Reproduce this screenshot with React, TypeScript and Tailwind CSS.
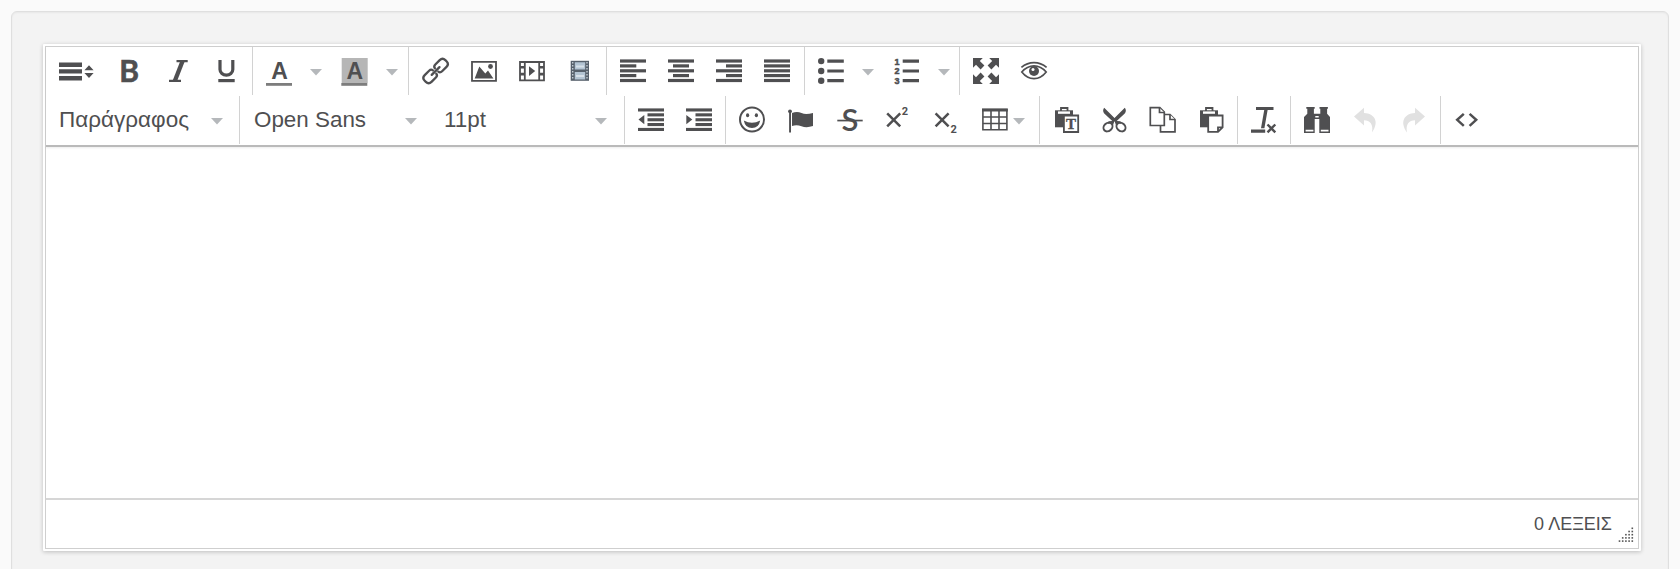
import type { ReactNode } from 'react';

function Icon({ children, width = 26 }: { children: ReactNode; width?: number }) {
  return (
    <svg
      className="shrink-0 overflow-visible"
      width={width}
      height="26"
      viewBox={`0 0 ${width} 26`}
      fill="currentColor"
      aria-hidden="true"
    >
      {children}
    </svg>
  );
}

function Button({ children, className = 'w-12' }: { children: ReactNode; className?: string }) {
  return <button className={`flex h-12 shrink-0 items-center justify-center ${className}`}>{children}</button>;
}

function Caret() {
  return (
    <svg className="mt-0.5 shrink-0" width="12" height="7" viewBox="0 0 12 7" fill="#b5b8bb" aria-hidden="true">
      <path d="M0 0h12L6 6.6z" />
    </svg>
  );
}

function CaretButton() {
  return (
    <Button className="w-[26px]">
      <Caret />
    </Button>
  );
}

function Group({ children, className }: { children: ReactNode; className: string }) {
  return <div className={`flex h-12 shrink-0 border-l border-[#d2d2d2] pl-0.5 ${className}`}>{children}</div>;
}

const lineTops = [1.4, 6.3, 11.2, 16, 20.9];

function Lines({ shortX, shortWidth }: { shortX: number; shortWidth: number }) {
  return (
    <Icon>
      {lineTops.map((y, i) => (
        <rect key={y} x={i % 2 ? shortX : 0} y={y} width={i % 2 ? shortWidth : 26} height="3.2" />
      ))}
    </Icon>
  );
}

function IndentLines({ arrow }: { arrow: string }) {
  return (
    <Icon>
      {lineTops.map((y, i) => (
        <rect key={y} x={i % 4 ? 9.5 : 0} y={y} width={i % 4 ? 16.5 : 26} height="3.1" />
      ))}
      <path d={arrow} />
    </Icon>
  );
}

function Clipboard() {
  return (
    <>
      <path d="M2 3.3h18v17H2z" />
      <path d="M8 4V1h6.5v3" fill="none" stroke="currentColor" strokeWidth="1.8" />
      <path d="M5 4.4h12v2.4H5z" fill="#fff" />
    </>
  );
}

const expandArrow = 'M0 0h9.8L6.8 3l4.6 4.6-3.8 3.8L3 6.8l-3 3z';

export default function App() {
  return (
    <div className="h-[569px] overflow-hidden bg-[#fafafa] px-[11px] pt-[11px] font-['Liberation_Sans',Arial,sans-serif] text-[#4f4f51]">
      <div className="h-[600px] rounded-md border border-[#dfdfdf] bg-[#f3f3f3] pt-8 pr-[27px] pl-[31px] shadow-[inset_0_1px_2px_rgba(0,0,0,0.05)]">
        <div className="rounded-[1px] bg-white p-0.5 shadow-[0_1px_4px_rgba(0,0,0,0.22)]">
          <div className="flex h-[503px] flex-col border border-[#cfcfcf] bg-white">
            <div className="h-[100px] shrink-0 border-b-2 border-[#bababa] shadow-[0_1px_2px_rgba(0,0,0,0.08)]">
              <div className="flex">
                <div className="flex w-[206px] shrink-0">
                  <Button className="w-[60px]">
                    <Icon width={36}>
                      <path d="M1 4.5h23v4.4H1zM1 11.2h23v4.4H1zM1 18h23v4.4H1zM31 7.3l4.6 5h-9.2zM31 20l4.6-5h-9.2z" />
                    </Icon>
                  </Button>
                  <Button>
                    <Icon>
                      <text
                        x="2.2"
                        y="24"
                        className="font-['Lato'] text-[30px] font-bold"
                        stroke="currentColor"
                        strokeWidth=".6"
                      >
                        B
                      </text>
                    </Icon>
                  </Button>
                  <Button>
                    <Icon>
                      <path d="M11.5 3.2h11.2M4 22.8h12" fill="none" stroke="currentColor" strokeWidth="2.2" />
                      <path d="M15.3 3h4.6l-7.8 20H7.5z" />
                    </Icon>
                  </Button>
                  <Button>
                    <Icon>
                      <path d="M7 2v9.5a6.4 5.6 0 0 0 12.8 0V2" fill="none" stroke="currentColor" strokeWidth="3.2" />
                      <path d="M5.3 21h16.4v3.2H5.3z" />
                    </Icon>
                  </Button>
                </div>
                <Group className="w-[156px]">
                  <Button>
                    <Icon>
                      <text x="13.5" y="21" textAnchor="middle" className="text-[23px] font-bold">A</text>
                      <path d="M0 25h26v2.8H0z" fill="#7d7d7d" />
                    </Icon>
                  </Button>
                  <CaretButton />
                  <Button className="w-[50px]">
                    <Icon>
                      <path d="M.7 0h26v25H.7z" fill="#b6b6b6" />
                      <text x="13.7" y="21" textAnchor="middle" className="text-[23px] font-bold">A</text>
                      <path d="M.3 25h26v2.8H.3z" fill="#7d7d7d" />
                    </Icon>
                  </Button>
                  <CaretButton />
                </Group>
                <Group className="w-[198px]">
                  <Button>
                    <Icon>
                      <g
                        transform="translate(.6) rotate(-45 13 13)"
                        fill="none"
                        stroke="currentColor"
                        strokeWidth="2.3"
                        strokeLinecap="round"
                      >
                        <path d="M11.6 15.4q-.3 2.4-3 2.4H2.4q-4 0-4-4v-1.6q0-4 4-4h6.2q2.7 0 3 2.4" />
                        <path d="M14.4 15.4q.3 2.4 3 2.4h6.2q4 0 4-4v-1.6q0-4-4-4h-6.2q-2.7 0-3 2.4" />
                        <path d="M7.5 13h11" />
                      </g>
                    </Icon>
                  </Button>
                  <Button>
                    <Icon>
                      <path d="M2 3.8h24v19H2z" fill="none" stroke="currentColor" strokeWidth="1.8" />
                      <path d="M4.7 20.5l4.6-12 6 7 2.7-3 5.4 8z" />
                      <circle cx="20.5" cy="8.5" r="2.4" />
                    </Icon>
                  </Button>
                  <Button>
                    <Icon>
                      <path d="M2 4h24v18.4H2zM6.8 4v18.4M21.2 4v18.4" fill="none" stroke="currentColor" strokeWidth="1.8" />
                      <path d="M2 8h5v2.6H2zM2 14.8h5v2.6H2zM21 8h5v2.6h-5zM21 14.8h5v2.6h-5zM11 8.3l6.2 4.8-6.2 4.8z" />
                    </Icon>
                  </Button>
                  <Button>
                    <Icon>
                      <path d="M4.7 2.8H23v20H4.7z" fill="#56606b" />
                      <path d="M8.8 4.2h10.4v7.4H8.8zM8.8 14h10.4v7.4H8.8z" fill="#b3c4d3" />
                      <path d="M10 8.4h8M10 18h8" stroke="#d8e1e9" strokeWidth="2" />
                      <path d="M6.7 4v18M21 4v18" stroke="#c3ccd4" strokeWidth="1.4" strokeDasharray="1.4 1.6" />
                    </Icon>
                  </Button>
                </Group>
                <Group className="w-[198px]">
                  <Button><Lines shortX={0} shortWidth={16.3} /></Button>
                  <Button><Lines shortX={5} shortWidth={16} /></Button>
                  <Button><Lines shortX={10} shortWidth={16} /></Button>
                  <Button><Lines shortX={0} shortWidth={26} /></Button>
                </Group>
                <Group className="w-[155px]">
                  <Button>
                    <Icon>
                      <circle cx="3.2" cy="3.1" r="3.2" />
                      <circle cx="3.2" cy="13" r="3.2" />
                      <circle cx="3.2" cy="22.7" r="3.2" />
                      <path d="M9.3 1.5h16.5v3.2H9.3zM9.3 11.4h16.5v3.2H9.3zM9.3 21.1h16.5v3.2H9.3z" />
                    </Icon>
                  </Button>
                  <CaretButton />
                  <Button className="w-[50px]">
                    <Icon>
                      <g
                        className="font-['Liberation_Sans'] text-[9px] font-bold"
                        textAnchor="middle"
                        stroke="currentColor"
                        strokeWidth=".5"
                      >
                        <text x="4" y="6.6">1</text>
                        <text x="4" y="16.4">2</text>
                        <text x="4" y="26.2">3</text>
                      </g>
                      <path d="M9.7 1.5h16.3v3.2H9.7zM9.7 11.4h16.3v3.2H9.7zM9.7 21.1h16.3v3.2H9.7z" />
                    </Icon>
                  </Button>
                  <CaretButton />
                </Group>
                <Group className="w-[110px]">
                  <Button>
                    <Icon>
                      <path d={expandArrow} />
                      <path d={expandArrow} transform="rotate(90 13 13)" />
                      <path d={expandArrow} transform="rotate(180 13 13)" />
                      <path d={expandArrow} transform="rotate(270 13 13)" />
                    </Icon>
                  </Button>
                  <Button>
                    <Icon>
                      <g fill="none" stroke="currentColor" strokeWidth="1.7">
                        <path d="M.8 14Q6 7.8 13 7.8T25.2 14Q20 20.6 13 20.6T.8 14z" />
                        <path d="M.4 9.4Q6 4.6 13 4.6t12.6 4.8" />
                      </g>
                      <circle cx="13" cy="13" r="5" />
                      <circle cx="12" cy="11.4" r="1.5" fill="#fff" />
                    </Icon>
                  </Button>
                </Group>
              </div>

              <div className="mt-px flex">
                <button className="flex h-12 w-[193px] shrink-0 items-center justify-between pr-4 pl-[13px] text-[22.5px]">
                  Παράγραφος
                  <Caret />
                </button>
                <Group className="w-[385px]">
                  <button className="flex h-12 w-[175px] items-center justify-between pl-3 text-[22.4px]">
                    Open Sans
                    <Caret />
                  </button>
                  <button className="ml-[27px] flex h-12 w-[163px] items-center justify-between text-[22.4px]">
                    11pt
                    <Caret />
                  </button>
                </Group>
                <Group className="w-[101px]">
                  <Button><IndentLines arrow="M.5 12.6L6.3 8v9.2z" /></Button>
                  <Button><IndentLines arrow="M6.3 12.6L.3 8v9.2z" /></Button>
                </Group>
                <Group className="w-[314px]">
                  <Button>
                    <Icon>
                      <circle cx="13" cy="12.5" r="12" fill="none" stroke="currentColor" strokeWidth="2" />
                      <ellipse cx="8.6" cy="8.3" rx="1.6" ry="2" />
                      <ellipse cx="17.4" cy="8.3" rx="1.6" ry="2" />
                      <path d="M4.8 13.5q8.2 4.6 16.4 0-1.4 7.6-8.2 7.6t-8.2-7.6z" />
                    </Icon>
                  </Button>
                  <Button>
                    <Icon>
                      <circle cx="3" cy="4.3" r="1.9" />
                      <path d="M2.1 4.5H4v21H2.1z" />
                      <path d="M5 6.1q5-2 9.5 0t11.5-.2v13.2q-6.500 2.200-11.500.2T5 19.100z" />
                    </Icon>
                  </Button>
                  <Button>
                    <Icon>
                      <text x="15" y="24" textAnchor="middle" className="font-['Lato'] text-[31px] font-semibold">S</text>
                      <path d="M2.3 12.7h25.4v1.7H2.3z" />
                    </Icon>
                  </Button>
                  <Button>
                    <Icon>
                      <path d="M4.2 6.4l13 13M17.200 6.400l-13 13" fill="none" stroke="currentColor" strokeWidth="2.5" />
                      <text x="18.7" y="7.8" className="font-['Roboto'] text-[11px] font-bold">2</text>
                    </Icon>
                  </Button>
                  <Button>
                    <Icon>
                      <path d="M4.6 6.400l13 13M17.600 6.400l-13 13" fill="none" stroke="currentColor" strokeWidth="2.5" />
                      <text x="19.4" y="25.5" className="font-['Roboto'] text-[11px] font-bold">2</text>
                    </Icon>
                  </Button>
                  <Button className="ml-[13px] w-11 gap-[5px]">
                    <Icon>
                      <path
                        d="M.9 2.5h24v20.3H.9zM9 2.5v20.3M17 2.5v20.3M1 10h24M1 16.5h24"
                        fill="none"
                        stroke="currentColor"
                        strokeWidth="1.6"
                      />
                      <path d="M0 1.5h25.8v3H0z" />
                    </Icon>
                    <Caret />
                  </Button>
                </Group>
                <Group className="w-[198px]">
                  <Button>
                    <Icon>
                      <Clipboard />
                      <path d="M10.9 8.5h14.3V25H10.9z" fill="#fff" stroke="currentColor" strokeWidth="1.8" />
                      <text
                        x="18"
                        y="21.5"
                        textAnchor="middle"
                        className="font-['Liberation_Serif'] text-[15px] font-bold"
                        stroke="currentColor"
                        strokeWidth=".4"
                      >
                        T
                      </text>
                    </Icon>
                  </Button>
                  <Button>
                    <Icon>
                      <path d="M3.200.8L13.500 11 23.800.8q2 2.600.2 5.500l-8.800 8.200h-3.400L3 6.300Q1.200 3.400 3.200.8z" />
                      <path
                        d="M12.400 13.500q-.4 2.400-1.200 3.700M14.600 13.500q.4 2.400 1.200 3.700M12.200 15.200Q9.400 14.800 7 16M14.800 15.200q2.800-.4 5.200.8"
                        fill="none"
                        stroke="currentColor"
                        strokeWidth="2"
                      />
                      <path d="M11.500 8h4l-2 2.400z" fill="#fff" />
                      <g fill="none" stroke="currentColor" strokeWidth="2">
                        <ellipse cx="7" cy="20" rx="4.900" ry="3.900" transform="rotate(-42 7 20)" />
                        <ellipse cx="20" cy="20" rx="4.900" ry="3.900" transform="rotate(42 20 20)" />
                      </g>
                    </Icon>
                  </Button>
                  <Button>
                    <Icon>
                      <g fill="#fff" stroke="currentColor" strokeWidth="1.7">
                        <path d="M11.5 7.5H21l5 5v12.4H11.5z" />
                        <path d="M21 7.5v5h5" />
                        <path d="M1.3.7h9.5l4.5 4.500v13.300h-14z" />
                        <path d="M10.5.7v4.800h4.800" />
                      </g>
                    </Icon>
                  </Button>
                  <Button>
                    <Icon>
                      <g transform="translate(1)">
                        <Clipboard />
                      </g>
                      <path
                        d="M11.2 8.5h14.4v11.8L21 24.9h-9.8zM21 24.8v-4.5h4.5"
                        fill="#fff"
                        stroke="currentColor"
                        strokeWidth="1.8"
                      />
                    </Icon>
                  </Button>
                </Group>
                <Group className="w-[53px]">
                  <Button>
                    <Icon>
                      <path d="M5 0h17.500v3H5zM13.400 2h3.400l-3.400 19.300H10zM0 22.600h14.200v3.200H0z" />
                      <path d="M16.5 17.500l7.800 7.800M24.300 17.500l-7.800 7.800" stroke="currentColor" strokeWidth="2.4" />
                    </Icon>
                  </Button>
                </Group>
                <Group className="w-[150px]">
                  <Button>
                    <Icon>
                      <path d="M2.3 0h8.4v1.8h-.8v5h6.4v-5h-.8V0h8.400v1.800h-.8v5L26 10v16H15.300V12h-4.600v14H0V10l3.300-3.200v-5h-1z" />
                      <path d="M1.6 22.700h7.800v1.800H1.600zM16.800 22.700h7.700v1.800h-7.700zM11.300 9h3.400v1.500h-3.400z" fill="#fff" />
                    </Icon>
                  </Button>
                  <Button className="w-12 text-[#e1e1e1]">
                    <Icon>
                      <path d="M2 9.5L12 .8V6c11 .6 15.500 9 8 19.500C21.500 17 18 13.500 12 13.300v5.200z" />
                    </Icon>
                  </Button>
                  <Button className="w-12 text-[#e1e1e1]">
                    <Icon>
                      <path d="M25 9.5L15 .8V6C4 6.600-.5 15 7 25.500 5.500 17 9 13.500 15 13.300v5.200z" />
                    </Icon>
                  </Button>
                </Group>
                <Group className="w-[60px]">
                  <Button>
                    <Icon>
                      <path
                        d="M9.8 6.800l-6.600 6 6.600 6M15.600 6.800l6.600 6-6.600 6"
                        fill="none"
                        stroke="currentColor"
                        strokeWidth="2.5"
                      />
                    </Icon>
                  </Button>
                </Group>
              </div>
            </div>

            <div className="grow" />

            <div className="flex h-[50px] shrink-0 items-center justify-end border-t-2 border-[#d6d6d6]">
              <span className="text-lg">0 ΛΕΞΕΙΣ</span>
              <svg className="mt-[22px] mr-1 ml-1.5" width="16" height="16" viewBox="0 0 16 16" fill="#555" aria-hidden="true">
                {[0, 1, 2, 3, 4].map((row) =>
                  Array.from({ length: row + 1 }, (_, i) => (
                    <rect key={`${row}-${i}`} x={13.5 - i * 3.2} y={0.5 + row * 3.2} width="1.6" height="1.6" />
                  )),
                )}
              </svg>
            </div>
          </div>
        </div>
      </div>
    </div>
  );
}
